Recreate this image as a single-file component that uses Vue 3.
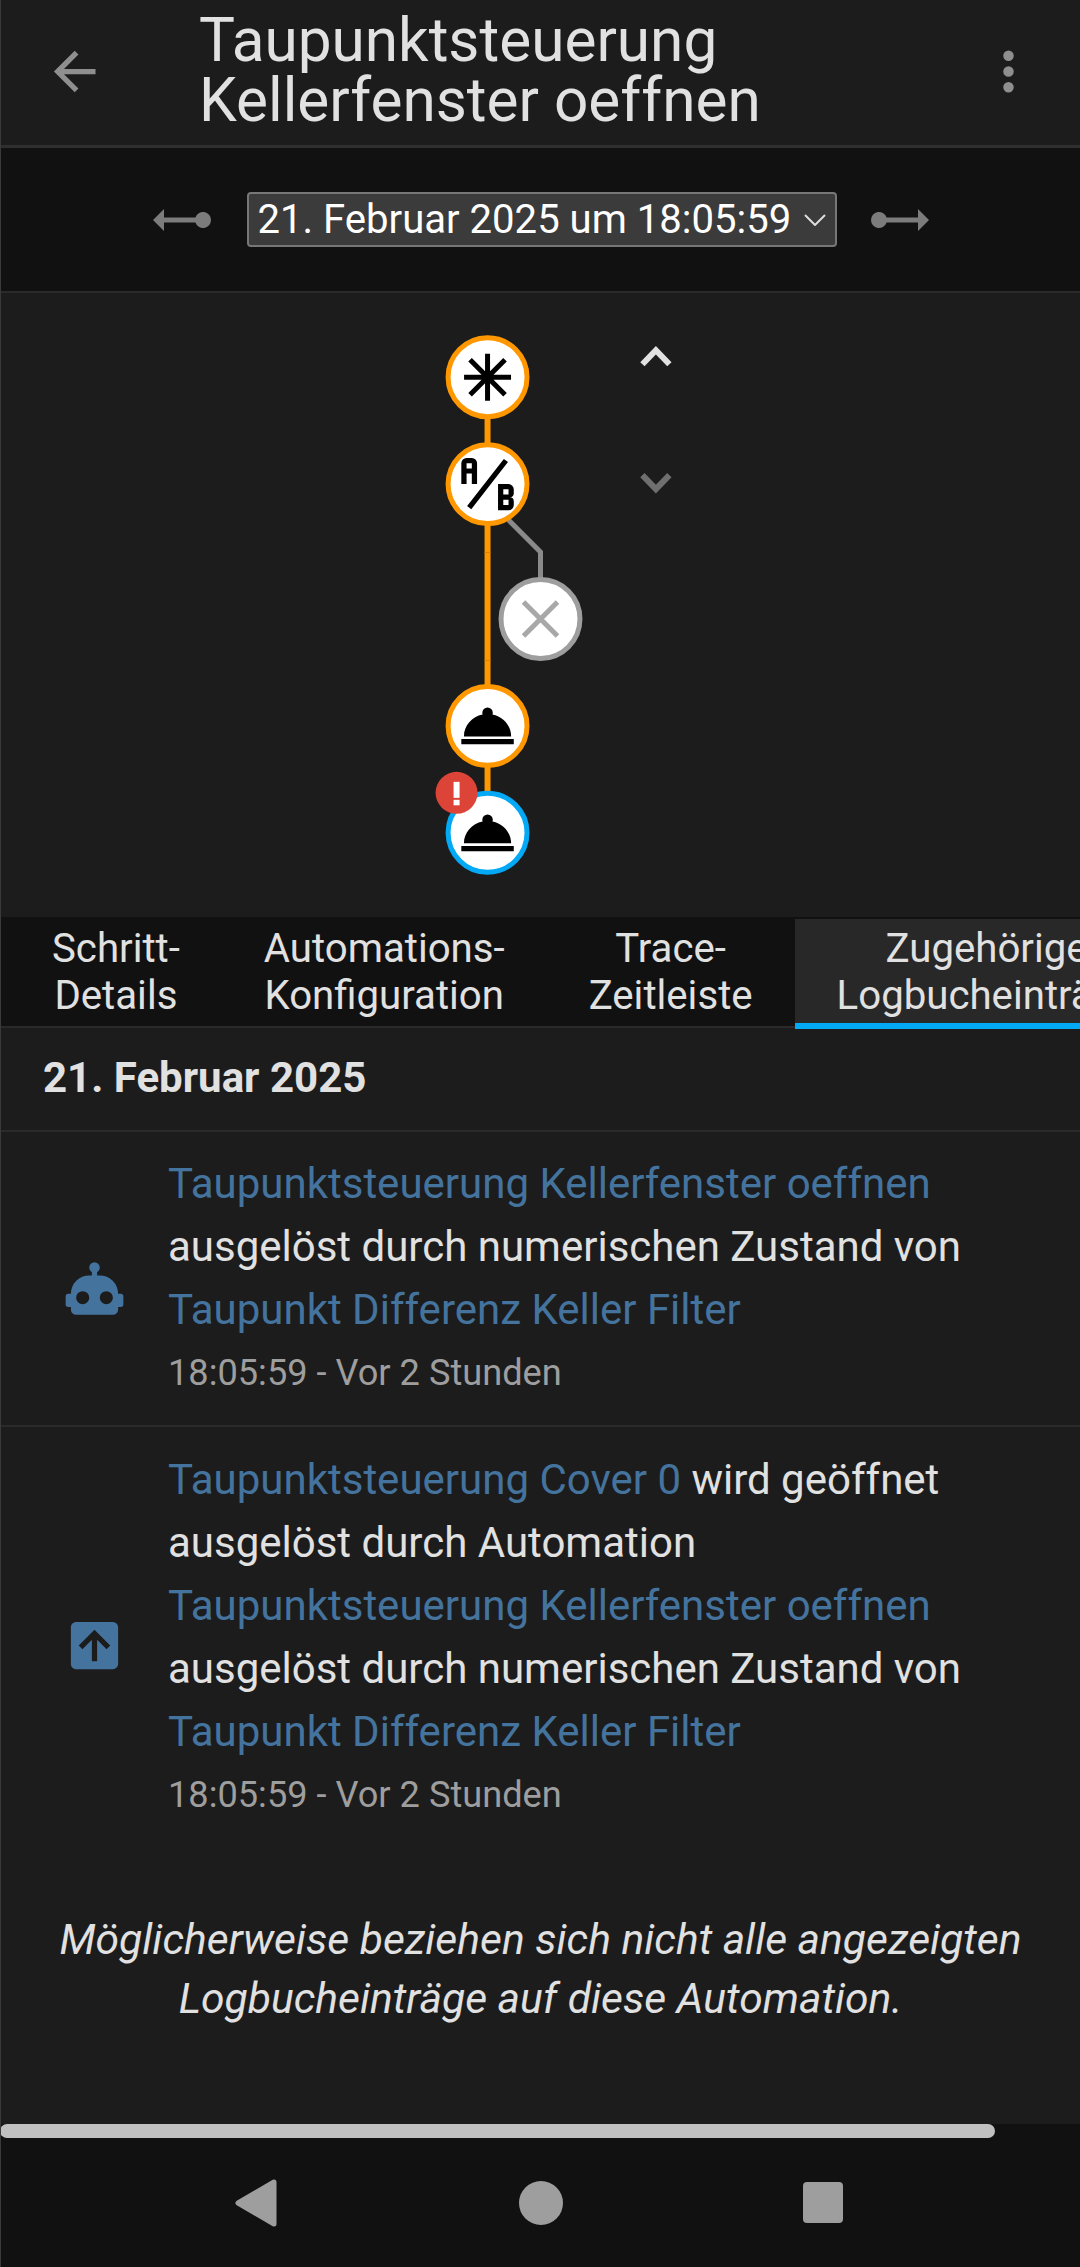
<template>
  <div class="screen">
    <header class="top">
      <svg class="icon back" viewBox="0 0 24 24"><path :d="icons.back" /></svg>
      <h1>Taupunktsteuerung<br />Kellerfenster oeffnen</h1>
      <svg class="icon dots" viewBox="0 0 24 24"><path :d="icons.dots" /></svg>
    </header>

    <div class="picker">
      <svg class="ray flip" viewBox="0 0 58 22"><path :d="icons.ray" /></svg>
      <div class="select">
        <span>21. Februar 2025 um 18:05:59</span>
        <svg class="caret" viewBox="0 0 22 12"><path d="M1 1L11 11L21 1" /></svg>
      </div>
      <svg class="ray" viewBox="0 0 58 22"><path :d="icons.ray" /></svg>
    </div>

    <svg class="graph" viewBox="0 293 1080 624">
      <path class="wire orange" d="M487 377V833" />
      <path class="wire seam" d="M484 552.5H490M484 660.5H490" />
      <path class="wire grey" d="M508 520L540 552V580" />

      <g v-for="n in nodes" :key="n.y">
        <circle :cx="n.x" :cy="n.y" r="39.5" :stroke="n.color" class="node" />
        <path
          v-if="n.icon"
          :d="icons[n.icon]"
          :transform="`translate(${n.x - 31.5} ${n.y - 31.5}) scale(2.625)`"
        />
      </g>

      <path class="thin" d="M487 353.5V400.5M463.5 377H510.5M469.5 359.5L504.5 394.5M504.5 359.5L469.5 394.5" />
      <path class="cross" d="M523 602L557 636M557 602L523 636" />

      <circle cx="456" cy="793" r="21" fill="#db4437" />
      <rect x="453" y="782" width="6" height="16" fill="#fff" />
      <rect x="453" y="800" width="6" height="5.5" fill="#fff" />

      <path class="chev up" d="M642 364L655.5 350L669 364" />
      <path class="chev down" d="M642 475L655.5 489L669 475" />
    </svg>

    <nav class="tabs">
      <div v-for="(t, i) in tabs" :key="t[0]" class="tab" :class="{ active: i === 3 }">
        {{ t[0] }}<br />{{ t[1] }}
      </div>
    </nav>

    <main class="log">
      <div class="day">21. Februar 2025</div>

      <div class="entry">
        <svg class="icon state" viewBox="0 0 24 24"><path :d="icons.robot" /></svg>
        <div class="body">
          <a>Taupunktsteuerung Kellerfenster oeffnen</a><br />
          ausgelöst durch numerischen Zustand von<br />
          <a>Taupunkt Differenz Keller Filter</a>
          <div class="time">18:05:59 - Vor 2 Stunden</div>
        </div>
      </div>

      <div class="entry">
        <svg class="icon state" viewBox="0 0 24 24"><path fill-rule="evenodd" :d="icons.cover" /></svg>
        <div class="body">
          <a>Taupunktsteuerung Cover 0</a> wird geöffnet<br />
          ausgelöst durch Automation<br />
          <a>Taupunktsteuerung Kellerfenster oeffnen</a><br />
          ausgelöst durch numerischen Zustand von<br />
          <a>Taupunkt Differenz Keller Filter</a>
          <div class="time">18:05:59 - Vor 2 Stunden</div>
        </div>
      </div>

      <p class="note">
        Möglicherweise beziehen sich nicht alle angezeigten<br />
        Logbucheinträge auf diese Automation.
      </p>
    </main>

    <footer class="navbar">
      <div class="scrollbar"></div>
      <svg class="nav-back" viewBox="0 0 44 48"><path d="M39 3V45L3 24Z" /></svg>
      <div class="nav-home"></div>
      <div class="nav-recent"></div>
    </footer>
  </div>
</template>

<script setup>
const icons = {
  back: 'M20,11V13H8L13.5,18.5L12.08,19.92L4.16,12L12.08,4.08L13.5,5.5L8,11H20Z',
  dots: 'M12,16A2,2 0 0,1 14,18A2,2 0 0,1 12,20A2,2 0 0,1 10,18A2,2 0 0,1 12,16M12,10A2,2 0 0,1 14,12A2,2 0 0,1 12,14A2,2 0 0,1 10,12A2,2 0 0,1 12,10M12,4A2,2 0 0,1 14,6A2,2 0 0,1 12,8A2,2 0 0,1 10,6A2,2 0 0,1 12,4Z',
  ray: 'M0 11A8 8 0 0 1 15.6 8.5H47V0L58 11L47 22V13.5H15.6A8 8 0 0 1 0 11Z',
  ab: 'M4 2A2 2 0 0 0 2 4V12H4V8H6V12H8V4A2 2 0 0 0 6 2H4M4 4H6V6H4M22 15.5V14A2 2 0 0 0 20 12H16V22H20A2 2 0 0 0 22 20V18.5A1.54 1.54 0 0 0 20.5 17A1.54 1.54 0 0 0 22 15.5M20 20H18V18H20V20M20 16H18V14H20M5.79 21.61L4.21 20.39L18.21 2.39L19.79 3.61Z',
  bell: 'M12,5A2,2 0 0,1 14,7C14,7.24 13.96,7.47 13.88,7.69C17.95,8.5 21,11.91 21,16H3C3,11.91 6.05,8.5 10.12,7.69C10.04,7.47 10,7.24 10,7A2,2 0 0,1 12,5M22,19H2V17H22V19Z',
  robot: 'M12,2A2,2 0 0,1 14,4C14,4.74 13.6,5.39 13,5.73V7H14A7,7 0 0,1 21,14H22A1,1 0 0,1 23,15V18A1,1 0 0,1 22,19H21V20A2,2 0 0,1 19,22H5A2,2 0 0,1 3,20V19H2A1,1 0 0,1 1,18V15A1,1 0 0,1 2,14H3A7,7 0 0,1 10,7H11V5.73C10.4,5.39 10,4.74 10,4A2,2 0 0,1 12,2M7.5,13A2.5,2.5 0 0,0 5,15.5A2.5,2.5 0 0,0 7.5,18A2.5,2.5 0 0,0 10,15.5A2.5,2.5 0 0,0 7.5,13M16.5,13A2.5,2.5 0 0,0 14,15.5A2.5,2.5 0 0,0 16.5,18A2.5,2.5 0 0,0 19,15.5A2.5,2.5 0 0,0 16.5,13Z',
  cover: 'M5,3H19A2,2 0 0,1 21,5V19A2,2 0 0,1 19,21H5C3.89,21 3,20.1 3,19V5C3,3.89 3.89,3 5,3ZM13,18V9.83L16.59,13.41L18,12L12,6L6,12L7.41,13.41L11,9.83V18H13Z',
}

const nodes = [
  { x: 487, y: 377, color: '#ff9800' },
  { x: 487, y: 484, color: '#ff9800', icon: 'ab' },
  { x: 540, y: 619, color: '#9e9e9e' },
  { x: 487, y: 726, color: '#ff9800', icon: 'bell' },
  { x: 487, y: 833, color: '#03a9f4', icon: 'bell' },
]

const tabs = [
  ['Schritt-', 'Details'],
  ['Automations-', 'Konfiguration'],
  ['Trace-', 'Zeitleiste'],
  ['Zugehörige', 'Logbucheinträge'],
]
</script>

<style>
html,
body {
  background: #111;
}
</style>

<style scoped>
.screen {
  position: relative;
  width: 1080px;
  height: 2267px;
  box-sizing: border-box;
  border-left: 1px solid #3a3a3a;
  display: flex;
  flex-direction: column;
  overflow: hidden;
  background: #1c1c1c;
  color: #e1e1e1;
  font-family: Roboto, "Liberation Sans", sans-serif;
}
.icon {
  width: 63px;
  height: 63px;
  flex: none;
  fill: #8f8f8f;
}
.top {
  height: 148px;
  box-sizing: border-box;
  flex: none;
  display: flex;
  align-items: center;
  padding: 0 40px 3px 42px;
  border-bottom: 3px solid #2f2f2f;
}
.top h1 {
  flex: 1;
  margin: 0 0 0 93px;
  font-size: 60.3px;
  font-weight: 400;
  line-height: 60px;
}
.picker {
  height: 145px;
  box-sizing: border-box;
  flex: none;
  background: #111;
  border-bottom: 2px solid #2a2a2a;
  display: flex;
  align-items: center;
  justify-content: center;
  gap: 35px;
}
.ray {
  width: 58px;
  height: 22px;
  flex: none;
  fill: #7c7c7c;
}
.flip {
  transform: scaleX(-1);
}
.select {
  width: 590px;
  height: 55px;
  margin: 0 -1px 0 1px;
  box-sizing: border-box;
  border: 2px solid #777;
  border-radius: 4px;
  background: #3b3b3b;
  color: #fff;
  font-size: 40.1px;
  display: flex;
  align-items: center;
  justify-content: space-between;
  padding: 0 9px 0 9px;
}
.caret {
  width: 22px;
  height: 12px;
  fill: none;
  stroke: #ddd;
  stroke-width: 2;
}
.graph {
  display: block;
  width: 1079px;
  height: 624px;
  flex: none;
}
.wire {
  fill: none;
  stroke-width: 6;
}
.orange {
  stroke: #ff9800;
}
.seam {
  stroke: #d98400;
  stroke-width: 1;
}
.grey {
  stroke: #8a8a8a;
  stroke-width: 5;
}
.node {
  fill: #fff;
  stroke-width: 5;
}
.thin {
  fill: none;
  stroke: #000;
  stroke-width: 5;
}
.cross {
  fill: none;
  stroke: #a8a8a8;
  stroke-width: 5;
}
.chev {
  fill: none;
  stroke-width: 6;
}
.up {
  stroke: #e1e1e1;
}
.down {
  stroke: #6f6f6f;
}
.tabs {
  height: 111px;
  box-sizing: border-box;
  flex: none;
  display: flex;
  background: #111;
  border-bottom: 2px solid #2a2a2a;
  padding-left: 9px;
  font-size: 40.2px;
  line-height: 47px;
  white-space: nowrap;
}
.tab {
  flex: none;
  padding: 8px 42px 0;
  text-align: center;
}
.active {
  background: #282828;
  margin-top: 2px;
  padding-top: 6px;
  height: 110px;
  box-sizing: border-box;
  border-bottom: 6px solid #03a9f4;
}
.log {
  flex: 1;
  min-height: 0;
}
.day {
  height: 104px;
  box-sizing: border-box;
  border-bottom: 2px solid #2a2a2a;
  padding-left: 42px;
  font-size: 42px;
  font-weight: 700;
  line-height: 100px;
}
.entry {
  display: flex;
  align-items: center;
  box-sizing: border-box;
  padding: 20px 0 21px 62px;
  font-size: 42px;
  line-height: 63px;
  border-bottom: 2px solid #2a2a2a;
}
.entry + .entry {
  padding-top: 21px;
  border-bottom: 0;
}
.state {
  fill: #44739e;
  margin: 20px 42px 0 0;
}
.entry + .entry .state {
  margin-top: 17px;
}
.entry a {
  color: #44739e;
}
.time {
  color: #9e9e9e;
  font-size: 36.2px;
}
.note {
  margin: 63px 0 0;
  text-align: center;
  font-style: italic;
  font-size: 42.6px;
  line-height: 59px;
}
.navbar {
  height: 143px;
  flex: none;
  position: relative;
  background: #111;
  display: flex;
  align-items: center;
}
.scrollbar {
  position: absolute;
  left: -1px;
  top: 0;
  width: 995px;
  height: 14px;
  border-radius: 7px;
  background: #c0c0c0;
}
.nav-back {
  width: 44px;
  height: 48px;
  margin: 14px 0 0 234px;
  fill: #9e9e9e;
  stroke: #9e9e9e;
  stroke-width: 5;
  stroke-linejoin: round;
}
.nav-home {
  width: 44px;
  height: 44px;
  margin: 14px 0 0 240px;
  border-radius: 50%;
  background: #9e9e9e;
}
.nav-recent {
  width: 40px;
  height: 41px;
  margin: 14px 0 0 240px;
  border-radius: 4px;
  background: #9e9e9e;
}
</style>
